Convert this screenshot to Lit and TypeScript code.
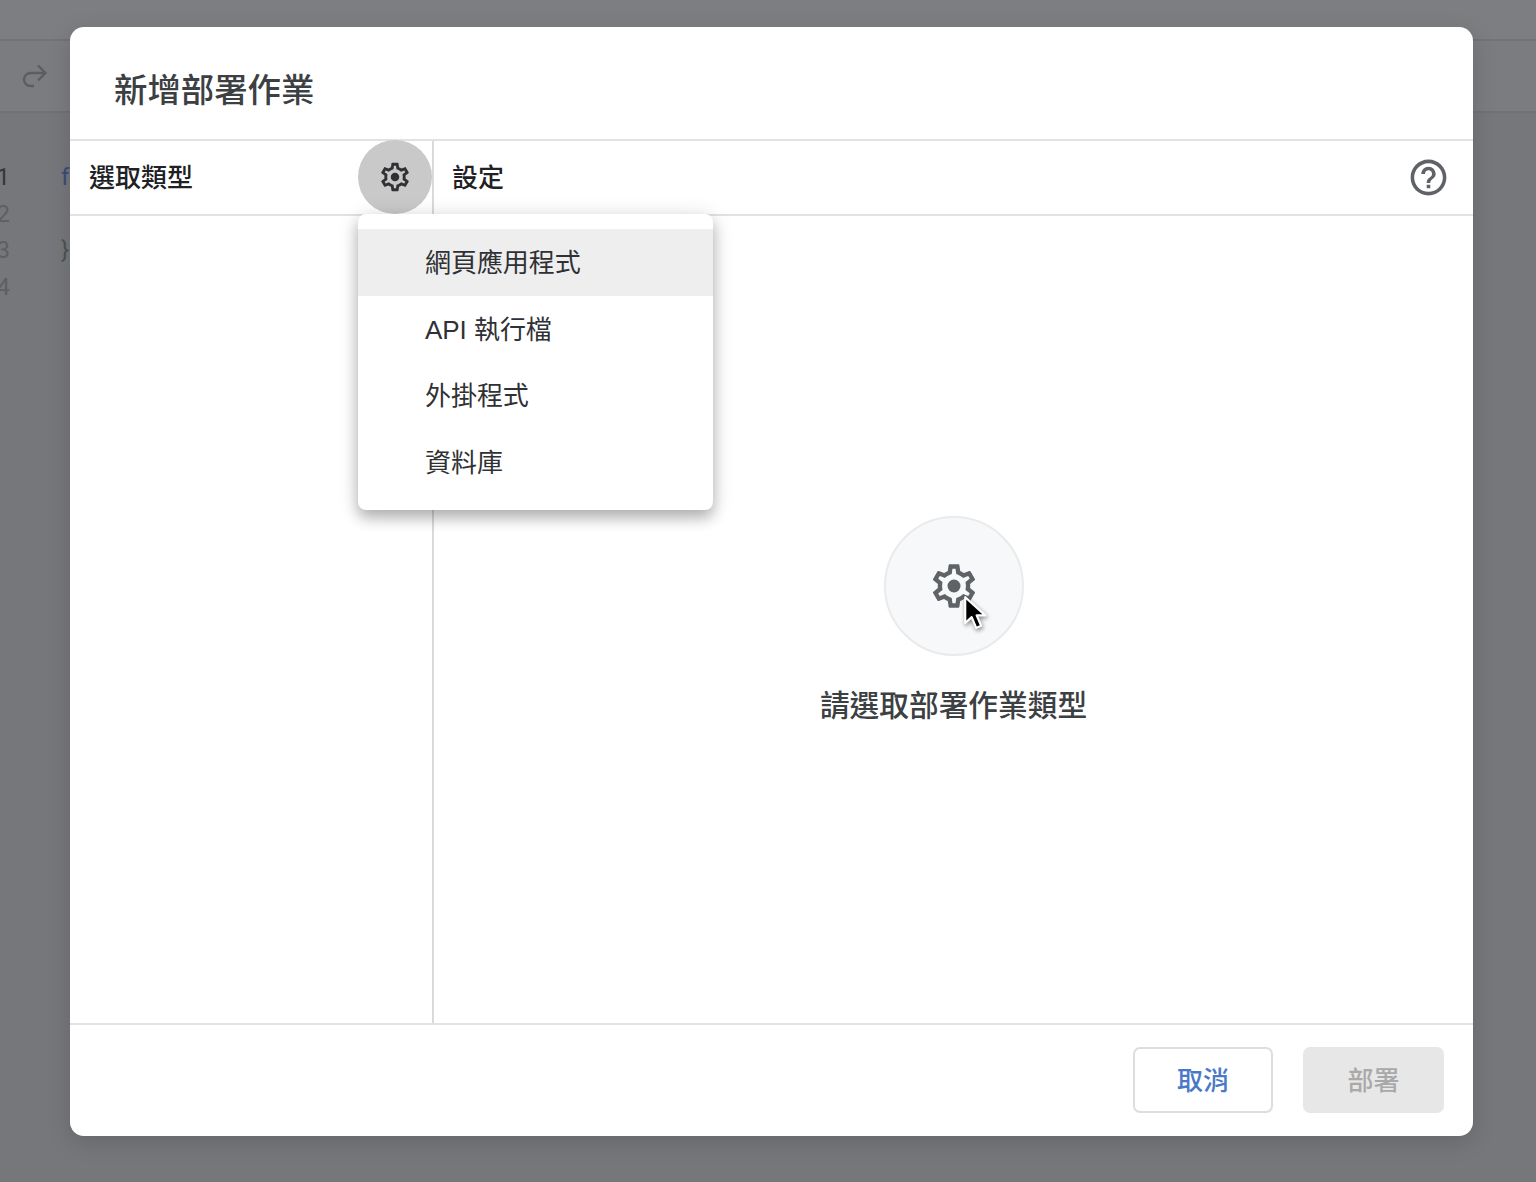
import { LitElement, html, css, svg } from "lit";
import { customElement } from "lit/decorators.js";

const gearOuter =
  "M19.43 12.98c.04-.32.07-.64.07-.98 0-.34-.03-.66-.07-.98l2.11-1.65c.19-.15.24-.42.12-.64l-2-3.46c-.09-.16-.26-.25-.44-.25-.06 0-.12.01-.17.03l-2.49 1c-.52-.4-1.08-.73-1.69-.98l-.38-2.65C14.46 2.18 14.25 2 14 2h-4c-.25 0-.46.18-.49.42l-.38 2.65c-.61.25-1.17.59-1.69.98l-2.49-1c-.06-.02-.12-.03-.18-.03-.17 0-.34.09-.43.25l-2 3.46c-.13.22-.07.49.12.64l2.11 1.65c-.04.32-.07.65-.07.98 0 .33.03.66.07.98l-2.11 1.65c-.19.15-.24.42-.12.64l2 3.46c.09.16.26.25.44.25.06 0 .12-.01.17-.03l2.49-1c.52.4 1.08.73 1.69.98l.38 2.65c.03.24.24.42.49.42h4c.25 0 .46-.18.49-.42l.38-2.65c.61-.25 1.17-.59 1.69-.98l2.49 1c.06.02.12.03.18.03.17 0 .34-.09.43-.25l2-3.46c.12-.22.07-.49-.12-.64l-2.11-1.65zm-1.98-1.71c.04.31.05.52.05.73 0 .21-.02.43-.05.73l-.14 1.13.89.7 1.08.84-.7 1.21-1.27-.51-1.04-.42-.9.68c-.43.32-.84.56-1.25.73l-1.06.43-.16 1.13-.2 1.35h-1.4l-.19-1.35-.16-1.13-1.06-.43c-.43-.18-.83-.41-1.23-.71l-.91-.7-1.06.43-1.27.51-.7-1.21 1.08-.84.89-.7-.14-1.13c-.03-.31-.05-.54-.05-.74s.02-.43.05-.73l.14-1.13-.89-.7-1.08-.84.7-1.21 1.27.51 1.04.42.9-.68c.43-.32.84-.56 1.25-.73l1.06-.43.16-1.13.2-1.35h1.39l.19 1.35.16 1.13 1.06.43c.43.18.83.41 1.23.71l.91.7 1.06-.43 1.27-.51.7 1.21-1.07.85-.89.7.14 1.13z";

const gear = (size: number, color: string) => html`<svg
  width=${size}
  height=${size}
  viewBox="0 0 24 24"
  fill=${color}
>
  ${svg`<path d=${gearOuter}></path><circle cx="12" cy="12" r="3"></circle>`}
</svg>`;

const helpIcon = html`<svg width="43" height="43" viewBox="0 0 24 24" fill="#5f6368">
  <path
    d="M11 18h2v-2h-2v2zm1-16C6.48 2 2 6.48 2 12s4.48 10 10 10 10-4.48 10-10S17.52 2 12 2zm0 18c-4.41 0-8-3.59-8-8s3.59-8 8-8 8 3.59 8 8-3.59 8-8 8zm0-14c-2.21 0-4 1.79-4 4h2c0-1.1.9-2 2-2s2 .9 2 2c0 2-3 1.75-3 5h2c0-2.25 3-2.5 3-5 0-2.21-1.79-4-4-4z"
  ></path>
</svg>`;

const redoIcon = html`<svg width="30" height="30" viewBox="0 0 30 30" fill="none" stroke="#5b5d61" stroke-width="2.4">
  <path d="M25 12H10.5a6.5 6.5 0 0 0 0 13H14"></path>
  <path d="M18 4.5 25.5 12 18 19.5"></path>
</svg>`;

const cursorIcon = html`<svg width="28" height="41" viewBox="0 0 26 38">
  <path
    d="M3 2v24l6-5.5 4.2 10 4.6-2-4.2-9.6h8z"
    fill="#000"
    stroke="#fff"
    stroke-width="2"
    stroke-linejoin="round"
  ></path>
</svg>`;

@customElement("app-root")
export class AppRoot extends LitElement {
  static styles = css`
    :host {
      display: block;
      position: relative;
      width: 1536px;
      height: 1182px;
      overflow: hidden;
      background: #76777b;
      font-family: "Noto Sans CJK TC", "Noto Sans", sans-serif;
    }
    .topbar {
      height: 39px;
      border-bottom: 2px solid #717376;
      background: #7c7e81;
    }
    .toolbar {
      height: 70px;
      border-bottom: 2px solid #6f7174;
      background: #7a7c7f;
      display: flex;
      align-items: center;
      padding-left: 20px;
    }
    .code {
      padding-top: 46px;
      display: flex;
      flex-direction: column;
      font-family: Roboto, sans-serif;
      font-size: 24px;
    }
    .line {
      height: 36.7px;
      line-height: 36.7px;
      display: flex;
      color: #4f5154;
    }
    .num {
      width: 10px;
      display: flex;
      justify-content: flex-end;
      color: #5d5f62;
      flex: none;
    }
    .num.active {
      color: #35373a;
    }
    .src {
      margin-left: 51px;
    }
    .src.kw {
      color: #3f4a78;
    }
    .overlay {
      position: absolute;
      inset: 0;
      padding: 27px 0 0 70px;
      box-sizing: border-box;
    }
    .modal {
      width: 1403px;
      height: 1109px;
      background: #fff;
      border-radius: 14px;
      display: flex;
      flex-direction: column;
      box-shadow: 0 6px 24px rgba(0, 0, 0, 0.14);
    }
    .title {
      height: 114px;
      flex: none;
      box-sizing: border-box;
      padding: 8px 0 0 44px;
      display: flex;
      align-items: center;
      font-size: 33.4px;
      font-weight: 500;
      color: #3c4043;
      border-bottom: 2px solid #e2e2e2;
    }
    .panes {
      flex: 1;
      display: grid;
      grid-template-columns: 364px 1fr;
      min-height: 0;
    }
    .left {
      position: relative;
      border-right: 2px solid #dadada;
      z-index: 1;
    }
    .pane-head {
      height: 73px;
      display: flex;
      align-items: center;
      justify-content: space-between;
      border-bottom: 2px solid #e2e2e2;
      font-size: 26px;
      font-weight: 500;
      color: #202124;
    }
    .label {
      padding-bottom: 4px;
    }
    .left .pane-head {
      padding-left: 19px;
    }
    .right {
      display: flex;
      flex-direction: column;
    }
    .right .pane-head {
      padding: 0 23px 0 18px;
    }
    .gear-btn {
      width: 74px;
      height: 74px;
      margin-top: -1px;
      border-radius: 50%;
      background: #c9c9c9;
      display: flex;
      align-items: center;
      justify-content: center;
    }
    .help {
      display: flex;
    }
    .menu {
      position: absolute;
      left: 288px;
      top: 73px;
      width: 355px;
      box-sizing: border-box;
      padding: 15px 0 14.6px;
      background: #fff;
      border-radius: 8px;
      box-shadow: 0 8px 14px rgba(0, 0, 0, 0.24), 0 3px 22px rgba(0, 0, 0, 0.14);
    }
    .item {
      height: 66.5px;
      box-sizing: border-box;
      display: flex;
      align-items: center;
      padding: 0 0 3px 67px;
      font-family: "Liberation Sans", "Noto Sans CJK TC", sans-serif;
      font-size: 26px;
      letter-spacing: -0.05px;
      color: #303134;
    }
    .item.hover {
      background: #eeeeee;
    }
    .empty {
      flex: 1;
      display: flex;
      flex-direction: column;
      align-items: center;
      justify-content: center;
    }
    .badge {
      position: relative;
      width: 140px;
      height: 140px;
      box-sizing: border-box;
      border-radius: 50%;
      background: #f7f8f9;
      border: 2px solid #e9eaeb;
      display: flex;
      align-items: center;
      justify-content: center;
    }
    .cursor {
      position: absolute;
      left: 76px;
      top: 77px;
      display: flex;
      filter: drop-shadow(1px 2px 2px rgba(0, 0, 0, 0.45));
    }
    .empty-text {
      margin-top: 28px;
      font-size: 29.7px;
      font-weight: 500;
      line-height: 40px;
      color: #3c4043;
    }
    .footer {
      height: 113px;
      flex: none;
      box-sizing: border-box;
      border-top: 2px solid #e2e2e2;
      display: flex;
      justify-content: flex-end;
      align-items: center;
      gap: 30px;
      padding: 0 29px 2px 0;
    }
    .btn {
      width: 141px;
      height: 66px;
      box-sizing: border-box;
      border-radius: 7px;
      display: flex;
      align-items: center;
      justify-content: center;
      font-size: 26px;
      font-weight: 500;
      padding-bottom: 2px;
    }
    .btn.cancel {
      width: 140px;
      background: #fff;
      border: 2px solid #dddddd;
      color: #4a78c8;
    }
    .btn.deploy {
      background: #e7e7e7;
      color: #a9a9a9;
    }
  `;

  render() {
    const lines = [
      { n: "1", src: "f", kw: true, active: true },
      { n: "2", src: "" },
      { n: "3", src: "}" },
      { n: "4", src: "" },
    ];
    const items = ["網頁應用程式", "API 執行檔", "外掛程式", "資料庫"];
    return html`
      <div class="topbar"></div>
      <div class="toolbar">${redoIcon}</div>
      <div class="code">
        ${lines.map(
          (l) => html`<div class="line">
            <span class="num ${l.active ? "active" : ""}">${l.n}</span>
            <span class="src ${l.kw ? "kw" : ""}">${l.src}</span>
          </div>`
        )}
      </div>
      <div class="overlay">
        <div class="modal">
          <div class="title">新增部署作業</div>
          <div class="panes">
            <div class="left">
              <div class="pane-head">
                <span class="label">選取類型</span>
                <div class="gear-btn">${gear(34, "#303134")}</div>
              </div>
              <div class="menu">
                ${items.map(
                  (t, i) => html`<div class="item ${i === 0 ? "hover" : ""}">${t}</div>`
                )}
              </div>
            </div>
            <div class="right">
              <div class="pane-head">
                <span class="label">設定</span>
                <span class="help">${helpIcon}</span>
              </div>
              <div class="empty">
                <div class="badge">
                  ${gear(52, "#5f6368")}
                  <span class="cursor">${cursorIcon}</span>
                </div>
                <div class="empty-text">請選取部署作業類型</div>
              </div>
            </div>
          </div>
          <div class="footer">
            <div class="btn cancel">取消</div>
            <div class="btn deploy">部署</div>
          </div>
        </div>
      </div>
    `;
  }
}
